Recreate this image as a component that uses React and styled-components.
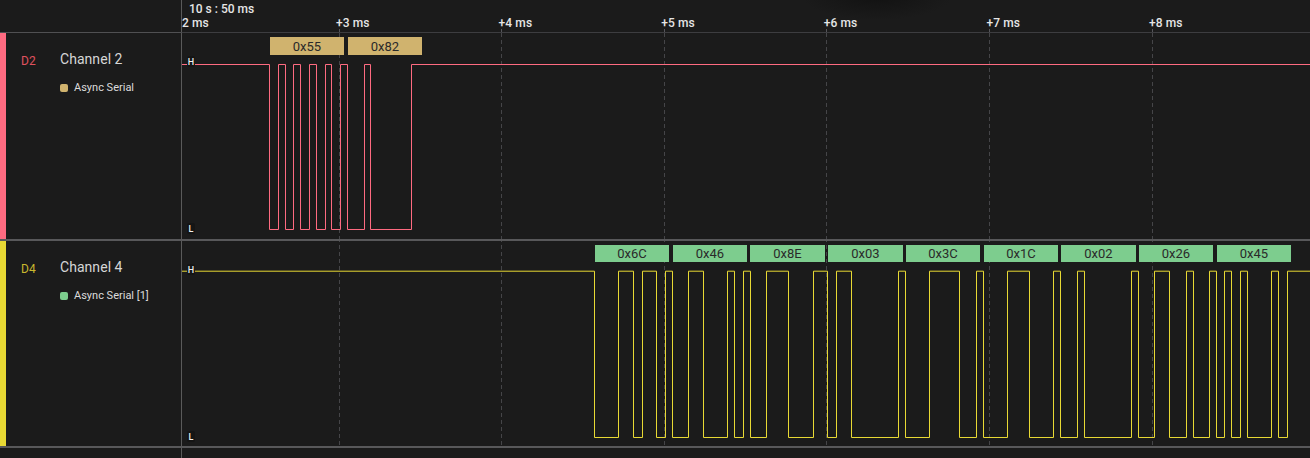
import React from "react";
import styled, { createGlobalStyle } from "styled-components";

const Global = createGlobalStyle`
  html, body { margin: 0; padding: 0; background: #1b1b1b; }
  body { font-family: Roboto, "Liberation Sans", sans-serif; overflow: hidden; }
`;

const Page = styled.div`
  width: 1310px;
  height: 458px;
  display: grid;
  grid-template-columns: 181px 1fr;
  grid-template-rows: 33px 208px 207px 10px;
  background: #1b1b1b;
  color: #e4e4e4;
  overflow: hidden;
`;

const HeaderCorner = styled.div`
  border-bottom: 1px solid #505052;
`;

const Ruler = styled.div`
  position: relative;
  border-left: 1px solid #5a5a5a;
  border-bottom: 1px solid #3d3d40;
  overflow: hidden;
  background: radial-gradient(ellipse 75px 24px at 695px -4px, #121212 0%, #1b1b1b 100%);
`;

const TimeOrigin = styled.div`
  position: absolute;
  left: 7px;
  top: 2px;
  font-size: 12px;
  line-height: 14px;
  font-weight: 500;
  color: #e6e6e6;
`;

const TickLabel = styled.div`
  position: absolute;
  top: 16px;
  font-size: 12px;
  line-height: 14px;
  font-weight: 500;
  letter-spacing: 0.1px;
  color: #e6e6e6;
  white-space: nowrap;
`;

const TickMark = styled.div`
  position: absolute;
  bottom: 0;
  width: 1px;
  height: 3px;
  background: #55555a;
`;

const Side = styled.div`
  display: flex;
  border-bottom: 2px solid #58585a;
`;

const Stripe = styled.div`
  width: 6px;
  flex: none;
  background: ${(p) => p.$color};
`;

const ChannelId = styled.div`
  width: 54px;
  flex: none;
  padding: 21px 0 0 15px;
  box-sizing: border-box;
  font-size: 12px;
  line-height: 14px;
  color: ${(p) => p.$color};
`;

const ChannelInfo = styled.div`
  display: flex;
  flex-direction: column;
  padding-top: 18px;
`;

const ChannelName = styled.div`
  font-size: 14px;
  line-height: 16px;
  letter-spacing: 0.05px;
  color: #d6d6d6;
`;

const Analyzer = styled.div`
  display: flex;
  align-items: center;
  gap: 6px;
  margin-top: 14px;
  font-size: 11px;
  line-height: 14px;
  color: #dcdcdc;
`;

const Dot = styled.span`
  width: 8px;
  height: 8px;
  border-radius: 2px;
  background: ${(p) => p.$color};
`;

const Track = styled.div`
  position: relative;
  border-left: 1px solid #5a5a5a;
  border-bottom: 2px solid #58585a;
  overflow: hidden;
`;

const Wave = styled.svg`
  position: absolute;
  left: 0;
  top: 0;
  width: 1128px;
  height: 208px;
  display: block;
`;

const Bubble = styled.div`
  position: absolute;
  top: 4px;
  height: ${(p) => p.$h}px;
  display: flex;
  align-items: center;
  justify-content: center;
  font-size: 13px;
  color: #2a2a2a;
  background: ${(p) => p.$color};
`;

const LevelMark = styled.div`
  position: absolute;
  left: 5px;
  top: ${(p) => p.$top}px;
  width: 8px;
  height: 11px;
  display: flex;
  align-items: center;
  justify-content: center;
  font-size: 9px;
  font-weight: 500;
  color: #f0f0f0;
  background: #151515;
  border-radius: 2px;
`;

const FooterCorner = styled.div``;
const FooterTrack = styled.div`
  border-left: 1px solid #5a5a5a;
`;

const TICKS = [3, 4, 5, 6, 7, 8].map((n, i) => ({
  label: `+${n} ms`,
  raw: 339 + i * 162.6 - 182,
  x: Math.floor(339 + i * 162.6) - 182,
}));

const Grid = ({ offset }) => (
  <>
    {TICKS.map((t) => (
      <line
        key={t.label}
        x1={t.x + 0.5}
        x2={t.x + 0.5}
        y1={0}
        y2={208}
        stroke="#454548"
        strokeWidth="1"
        strokeDasharray="4 3"
        strokeDashoffset={offset}
      />
    ))}
  </>
);

const wavePath = (edges, hi, lo) => {
  let d = `M0 ${hi}`;
  edges.forEach(([a, b]) => {
    d += ` H${a - 182} V${lo} H${b - 182} V${hi}`;
  });
  return d + ` H1128`;
};

const D2_LOWS = [
  [269.5, 278.5], [285.5, 293.5], [300.5, 309.5], [316.5, 325.5],
  [331.5, 340.5], [347.5, 364.5], [370.5, 411.5],
];

const D4_LOWS = [
  [594.5, 618.5], [633.5, 642.5], [656.5, 665.5], [672.5, 688.5],
  [703.5, 727.5], [734.5, 743.5], [750.5, 766.5], [788.5, 813.5],
  [827.5, 836.5], [851.5, 898.5], [905.5, 929.5], [959.5, 976.5],
  [983.5, 1007.5], [1029.5, 1053.5], [1060.5, 1077.5], [1084.5, 1131.5],
  [1138.5, 1154.5], [1169.5, 1186.5], [1193.5, 1209.5], [1216.5, 1224.5],
  [1231.5, 1240.5], [1247.5, 1271.5], [1278.5, 1287.5],
];

const D2_FRAMES = [
  { text: "0x55", a: 270, b: 344 },
  { text: "0x82", a: 348, b: 422 },
];

const D4_FRAMES = [
  { text: "0x6C", a: 595, b: 669 },
  { text: "0x46", a: 673, b: 747 },
  { text: "0x8E", a: 750, b: 825 },
  { text: "0x03", a: 828, b: 903 },
  { text: "0x3C", a: 906, b: 980 },
  { text: "0x1C", a: 984, b: 1058 },
  { text: "0x02", a: 1061, b: 1136 },
  { text: "0x26", a: 1139, b: 1213 },
  { text: "0x45", a: 1217, b: 1291 },
];

const Channel = ({ id, name, analyzer, color, idColor, accent, lows, frames, frameH, hi, lo, offset }) => (
  <>
    <Side>
      <Stripe $color={color} />
      <ChannelId $color={idColor}>{id}</ChannelId>
      <ChannelInfo>
        <ChannelName>{name}</ChannelName>
        <Analyzer><Dot $color={accent} />{analyzer}</Analyzer>
      </ChannelInfo>
    </Side>
    <Track>
      <Wave viewBox="0 0 1128 208">
        <Grid offset={offset} />
        <path d={wavePath(lows, hi, lo)} fill="none" stroke={color} strokeWidth="1" />
      </Wave>
      {frames.map((f) => (
        <Bubble key={f.text} $color={accent} $h={frameH} style={{ left: f.a - 182, width: f.b - f.a }}>
          {f.text}
        </Bubble>
      ))}
      <LevelMark $top={23}>H</LevelMark>
      <LevelMark $top={190}>L</LevelMark>
    </Track>
  </>
);

export default function App() {
  return (
    <>
      <Global />
      <Page>
        <HeaderCorner />
        <Ruler>
          <TimeOrigin>10 s : 50 ms</TimeOrigin>
          <TickLabel style={{ left: 0 }}>2 ms</TickLabel>
          {TICKS.map((t) => (
            <React.Fragment key={t.label}>
              <TickLabel style={{ left: t.raw - 3 }}>{t.label}</TickLabel>
              <TickMark style={{ left: t.x }} />
            </React.Fragment>
          ))}
        </Ruler>
        <Channel
          id="D2" name="Channel 2" analyzer="Async Serial"
          color="#ff6b81" idColor="#e0525f" accent="#d0b36e"
          lows={D2_LOWS} frames={D2_FRAMES} frameH={18}
          hi={31.5} lo={196.5} offset={0}
        />
        <Channel
          id="D4" name="Channel 4" analyzer="Async Serial [1]"
          color="#e8d934" idColor="#c9b82e" accent="#7dcd8e"
          lows={D4_LOWS} frames={D4_FRAMES} frameH={17}
          hi={30.2} lo={196.5} offset={3}
        />
        <FooterCorner />
        <FooterTrack />
      </Page>
    </>
  );
}
